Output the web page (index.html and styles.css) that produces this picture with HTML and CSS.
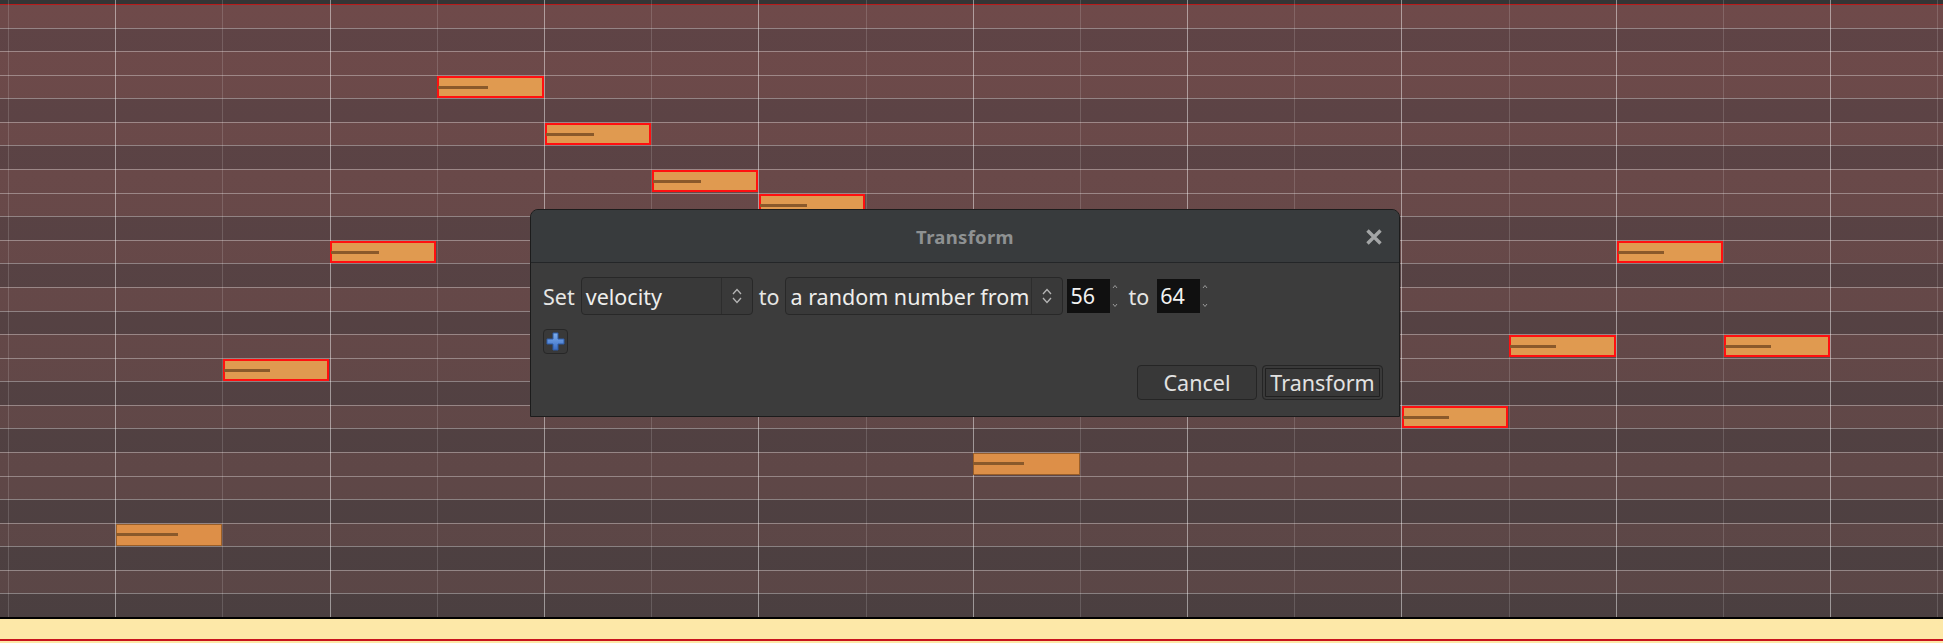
FILE: index.html
```html
<!DOCTYPE html>
<html>
<head>
<meta charset="utf-8">
<link rel="stylesheet" href="styles.css">
</head>
<body>
<div class="stage">
  <div class="topbar"></div>
  <div class="roll">
    <div class="row first"></div>
    <div class="row dark"></div>
    <div class="row"></div>
    <div class="row"></div>
    <div class="row dark"></div>
    <div class="row"></div>
    <div class="row dark"></div>
    <div class="row"></div>
    <div class="row"></div>
    <div class="row dark"></div>
    <div class="row"></div>
    <div class="row dark"></div>
    <div class="row"></div>
    <div class="row dark"></div>
    <div class="row"></div>
    <div class="row"></div>
    <div class="row dark"></div>
    <div class="row"></div>
    <div class="row dark"></div>
    <div class="row"></div>
    <div class="row"></div>
    <div class="row dark"></div>
    <div class="row"></div>
    <div class="row dark"></div>
    <div class="row"></div>
    <div class="row dark"></div>

    <div class="note" style="--c:1;--r:22;--v:62px"><span class="vel"></span></div>
    <div class="note sel" style="--c:2;--r:15;--v:46px"><span class="vel"></span></div>
    <div class="note sel" style="--c:3;--r:10;--v:48px"><span class="vel"></span></div>
    <div class="note sel" style="--c:4;--r:3;--v:50px"><span class="vel"></span></div>
    <div class="note sel" style="--c:5;--r:5;--v:48px"><span class="vel"></span></div>
    <div class="note sel" style="--c:6;--r:7;--v:48px"><span class="vel"></span></div>
    <div class="note sel" style="--c:7;--r:8;--v:47px"><span class="vel"></span></div>
    <div class="note" style="--c:9;--r:19;--v:51px"><span class="vel"></span></div>
    <div class="note sel" style="--c:13;--r:17;--v:46px"><span class="vel"></span></div>
    <div class="note sel" style="--c:14;--r:14;--v:46px"><span class="vel"></span></div>
    <div class="note sel" style="--c:15;--r:10;--v:46px"><span class="vel"></span></div>
    <div class="note sel" style="--c:16;--r:14;--v:46px"><span class="vel"></span></div>
  </div>
  <div class="vlines">
    <div class="col"></div><div class="col"></div><div class="col"></div><div class="col"></div>
    <div class="col"></div><div class="col"></div><div class="col"></div><div class="col"></div>
    <div class="col"></div><div class="col"></div><div class="col"></div><div class="col"></div>
    <div class="col"></div><div class="col"></div><div class="col"></div><div class="col"></div>
    <div class="col"></div><div class="col"></div><div class="col"></div>
  </div>
</div>
<div class="footer"><div class="footer-line"></div></div>

<div class="dialog">
  <div class="titlebar">
    <span class="title">Transform</span>
    <svg class="close" width="18" height="18" viewBox="0 0 18 18"><path d="M2.5 2.5 L15.5 15.5 M15.5 2.5 L2.5 15.5" stroke="#a3a5a6" stroke-width="3.4" fill="none"/></svg>
  </div>
  <div class="body">
    <div class="line">
      <span class="label">Set</span>
      <div class="combo combo-prop">
        <span class="combo-text">velocity</span>
        <span class="combo-btn"><svg width="10" height="18" viewBox="0 0 10 18"><path d="M1 7 L5 2.5 L9 7 M1 11 L5 15.5 L9 11" stroke="#b4b4b4" stroke-width="1.3" fill="none"/></svg></span>
      </div>
      <span class="label">to</span>
      <div class="combo combo-val">
        <span class="combo-text">a random number from</span>
        <span class="combo-btn"><svg width="10" height="18" viewBox="0 0 10 18"><path d="M1 7 L5 2.5 L9 7 M1 11 L5 15.5 L9 11" stroke="#b4b4b4" stroke-width="1.3" fill="none"/></svg></span>
      </div>
      <div class="spin">
        <span class="spin-box">56</span>
        <svg class="spin-arrows" width="6" height="26" viewBox="0 0 6 26"><path d="M1 5 L3 2.5 L5 5 M1 21 L3 23.5 L5 21" stroke="#9a9a9a" stroke-width="1" fill="none"/></svg>
      </div>
      <span class="label label-to2">to</span>
      <div class="spin">
        <span class="spin-box">64</span>
        <svg class="spin-arrows" width="6" height="26" viewBox="0 0 6 26"><path d="M1 5 L3 2.5 L5 5 M1 21 L3 23.5 L5 21" stroke="#9a9a9a" stroke-width="1" fill="none"/></svg>
      </div>
    </div>
    <div class="line2">
      <span class="add-btn">
        <svg width="19" height="19" viewBox="0 0 19 19">
          <defs><linearGradient id="pg" x1="0" y1="0" x2="0" y2="1"><stop offset="0" stop-color="#7fb0ee"/><stop offset="1" stop-color="#3a6cc4"/></linearGradient></defs>
          <path d="M7 1 H12 V7 H18 V12 H12 V18 H7 V12 H1 V7 H7 Z" fill="url(#pg)" stroke="#2c5aa6" stroke-width="1"/>
        </svg>
      </span>
    </div>
    <div class="buttons">
      <span class="btn btn-cancel">Cancel</span>
      <span class="btn btn-default">Transform</span>
    </div>
  </div>
</div>
</body>
</html>
```
FILE: styles.css
```css
html, body {
  margin: 0;
  padding: 0;
}
body {
  width: 1943px;
  height: 643px;
  overflow: hidden;
  background: #fde8a8;
  font-family: "Noto Sans", "Open Sans", sans-serif;
}
.stage {
  position: relative;
  height: 617px;
}
.topbar {
  height: 4px;
  background: #353535;
}
.roll {
  position: relative;
  height: 613px;
  display: grid;
  grid-template-rows: repeat(26, 1fr);
  background: linear-gradient(#6f4a4a, #594646) fixed;
}
.row {
  border-top: 1px solid rgba(255, 255, 255, 0.34);
}
.row.first {
  border-top: 1.5px solid #b81c1c;
}
.row.dark {
  background: linear-gradient(#604446, #4a3f40) fixed;
}
.vlines {
  position: absolute;
  left: 0;
  top: 0;
  right: 0;
  bottom: 0;
  display: flex;
  padding-left: 8px;
  overflow: hidden;
  pointer-events: none;
  z-index: 1;
}
.col {
  flex: 0 0 107.2px;
  box-sizing: border-box;
  border-left: 1px solid rgba(255, 255, 255, 0.15);
}
.col:nth-child(even) {
  border-left-color: rgba(255, 255, 255, 0.46);
}
.note {
  position: absolute;
  z-index: 2;
  left: calc(8px + 107.2px * var(--c) + 0.6px);
  top: calc(23.577px * var(--r) + 1px);
  width: 106.2px;
  height: 22.4px;
  box-sizing: border-box;
  background: #dd8f48;
  border: 1.5px solid #9a5e28;
}
.note.sel {
  background: #e09a50;
  border: 2px solid #ff1010;
}
.vel {
  position: absolute;
  left: -1px;
  top: 8px;
  width: var(--v);
  height: 3px;
  background: #8a592b;
}
.footer {
  height: 24px;
  border-top: 2px solid #000;
  background: #fde8a8;
}
.footer-line {
  height: 20px;
  border-bottom: 2px solid #c8141e;
}

/* dialog */
.dialog {
  position: absolute;
  left: 530px;
  top: 209px;
  width: 870px;
  height: 208px;
  box-sizing: border-box;
  border: 1px solid #1c1c1c;
  border-radius: 8px 8px 0 0;
  background: #3c3c3c;
  display: flex;
  flex-direction: column;
  color: #eeeeec;
  z-index: 5;
}
.titlebar {
  position: relative;
  height: 52px;
  flex: 0 0 52px;
  border-bottom: 1px solid #242628;
  border-radius: 7px 7px 0 0;
  background: #383b3d;
  display: flex;
  align-items: center;
  justify-content: center;
}
.title {
  font-weight: bold;
  font-size: 18.5px;
  color: #8e9192;
  letter-spacing: 0.3px;
}
.close {
  position: absolute;
  right: 16px;
  top: 18px;
}
.body {
  flex: 1;
  padding: 14px 16px 16px 12px;
  display: flex;
  flex-direction: column;
}
.line {
  display: flex;
  align-items: center;
  height: 38px;
  font-size: 21.5px;
}
.label {
  color: #e6e6e4;
  margin-right: 6px;
}
.label-to2 {
  margin-right: 8px;
}
.combo {
  height: 38px;
  box-sizing: border-box;
  border: 1px solid #282828;
  border-radius: 4px;
  background: #393939;
  display: flex;
  align-items: center;
  margin-right: 6px;
}
.combo-prop {
  width: 172px;
}
.combo-val {
  width: 278px;
  margin-right: 4px;
}
.combo-text {
  flex: 1;
  padding-left: 4px;
  white-space: nowrap;
  overflow: hidden;
}
.combo-btn {
  flex: 0 0 31px;
  height: 100%;
  box-sizing: border-box;
  border-left: 1px solid #2d2d2d;
  display: flex;
  align-items: center;
  justify-content: center;
}
.spin {
  display: flex;
  align-items: center;
  margin-right: 10px;
}
.spin-box {
  width: 43px;
  height: 34px;
  box-sizing: border-box;
  background: #101010;
  color: #f2f2f2;
  padding-left: 3px;
  line-height: 34px;
}
.spin-arrows {
  margin-left: 2px;
}
.line2 {
  margin-top: 14px;
  height: 25px;
  display: flex;
}
.add-btn {
  width: 25px;
  height: 25px;
  box-sizing: border-box;
  border: 1px solid #272727;
  border-radius: 4px;
  background: #393939;
  display: flex;
  align-items: center;
  justify-content: center;
}
.buttons {
  margin-top: 11px;
  display: flex;
  justify-content: flex-end;
  gap: 5px;
}
.btn {
  height: 35px;
  box-sizing: border-box;
  border: 1px solid #252525;
  border-radius: 4px;
  background: #383838;
  color: #e2e2e2;
  font-size: 21.5px;
  display: flex;
  align-items: center;
  justify-content: center;
}
.btn-cancel {
  width: 120px;
}
.btn-default {
  width: 121px;
  box-shadow: inset 0 0 0 2px #3a3a3a, inset 0 0 0 3px #202020;
}
```
